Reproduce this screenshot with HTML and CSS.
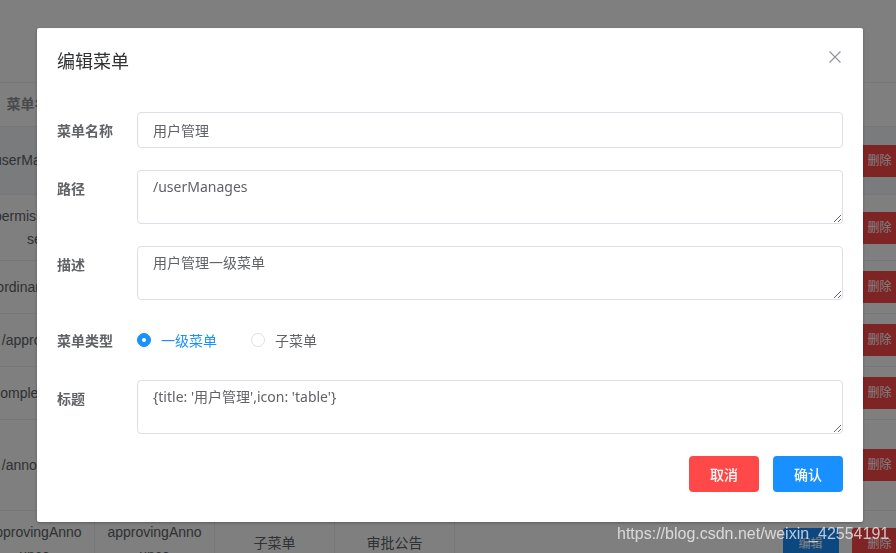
FILE: index.html
```html
<!DOCTYPE html>
<html lang="zh-CN">
<head>
<meta charset="utf-8">
<title>编辑菜单</title>
<link rel="stylesheet" href="styles.css">
</head>
<body>
<div class="page">
  <div class="table">
    <div class="tr th h44">
      <div class="td bl">菜单名称</div>
      <div class="td bl">菜单路径</div>
      <div class="td bl">菜单类型</div>
      <div class="td bl">标题</div>
      <div class="td wide"></div>
      <div class="td ops">操作</div>
    </div>
    <div class="tr hover h68">
      <div class="td bl">/userManages</div>
      <div class="td bl"></div>
      <div class="td bl"></div>
      <div class="td bl"></div>
      <div class="td wide"></div>
      <div class="td ops"><span class="tbtn edit">编辑</span><span class="tbtn del">删除</span></div>
    </div>
    <div class="tr h66">
      <div class="td bl">/permissionsU<br>se</div>
      <div class="td bl"></div>
      <div class="td bl"></div>
      <div class="td bl"></div>
      <div class="td wide"></div>
      <div class="td ops"><span class="tbtn edit">编辑</span><span class="tbtn del">删除</span></div>
    </div>
    <div class="tr h53">
      <div class="td bl">/ordinaryUser</div>
      <div class="td bl"></div>
      <div class="td bl"></div>
      <div class="td bl"></div>
      <div class="td wide"></div>
      <div class="td ops"><span class="tbtn edit">编辑</span><span class="tbtn del">删除</span></div>
    </div>
    <div class="tr h53">
      <div class="td bl">/approving</div>
      <div class="td bl"></div>
      <div class="td bl"></div>
      <div class="td bl"></div>
      <div class="td wide"></div>
      <div class="td ops"><span class="tbtn edit">编辑</span><span class="tbtn del">删除</span></div>
    </div>
    <div class="tr h53">
      <div class="td bl">/completedList</div>
      <div class="td bl"></div>
      <div class="td bl"></div>
      <div class="td bl"></div>
      <div class="td wide"></div>
      <div class="td ops"><span class="tbtn edit">编辑</span><span class="tbtn del">删除</span></div>
    </div>
    <div class="tr h91">
      <div class="td bl">/announce</div>
      <div class="td bl"></div>
      <div class="td bl"></div>
      <div class="td bl"></div>
      <div class="td wide"></div>
      <div class="td ops"><span class="tbtn edit">编辑</span><span class="tbtn del">删除</span></div>
    </div>
    <div class="tr h66">
      <div class="td bl">approvingAnnounce</div>
      <div class="td bl">approvingAnnounce</div>
      <div class="td bl">子菜单</div>
      <div class="td bl">审批公告</div>
      <div class="td wide"></div>
      <div class="td ops"><span class="tbtn edit">编辑</span><span class="tbtn del">删除</span></div>
    </div>
  </div>
</div>

<div class="overlay">
  <div class="dialog">
    <div class="dialog-header">
      <span class="dialog-title">编辑菜单</span>
      <svg class="close" width="16" height="16" viewBox="0 0 16 16">
        <path d="M2.5 2.5 L13.5 13.5 M13.5 2.5 L2.5 13.5" stroke="#909399" stroke-width="1.1" fill="none"/>
      </svg>
    </div>
    <div class="dialog-body">
      <div class="form-item">
        <label class="form-label">菜单名称</label>
        <input class="input" type="text" value="用户管理">
      </div>
      <div class="form-item">
        <label class="form-label">路径</label>
        <textarea class="textarea" rows="2">/userManages</textarea>
      </div>
      <div class="form-item">
        <label class="form-label">描述</label>
        <textarea class="textarea" rows="2">用户管理一级菜单</textarea>
      </div>
      <div class="form-item">
        <label class="form-label">菜单类型</label>
        <div class="radio-group">
          <span class="radio checked"><span class="radio-dot"></span><span class="radio-text">一级菜单</span></span>
          <span class="radio"><span class="radio-dot"></span><span class="radio-text">子菜单</span></span>
        </div>
      </div>
      <div class="form-item last">
        <label class="form-label">标题</label>
        <textarea class="textarea" rows="2">{title: '用户管理',icon: 'table'}</textarea>
      </div>
    </div>
    <div class="dialog-footer">
      <button class="btn btn-cancel">取消</button>
      <button class="btn btn-ok">确认</button>
    </div>
  </div>
</div>

<div class="watermark">https://blog.csdn.net/weixin_42554191</div>
</body>
</html>
```

FILE: styles.css
```css
html, body {
  margin: 0;
  padding: 0;
}
body {
  width: 896px;
  height: 553px;
  overflow: hidden;
  background: #fff;
  font-family: "Liberation Sans", "Noto Sans CJK SC", sans-serif;
  position: relative;
}

/* background table */
.page {
  padding-top: 82px;
}
.table {
  margin-left: -25px;
  width: 945px;
  border-top: 1px solid #ebeef5;
}
.tr {
  display: flex;
  align-items: stretch;
  box-sizing: border-box;
  border-bottom: 1px solid #ebeef5;
  background: #fff;
}
.tr.hover {
  background: #f5f7fa;
}
.h44 { height: 44px; }
.h53 { height: 53px; }
.h66 { height: 66px; }
.h68 { height: 68px; }
.h91 { height: 91px; }

.td {
  flex: none;
  width: 120px;
  box-sizing: border-box;
  padding: 0 10px;
  display: flex;
  align-items: center;
  justify-content: center;
  text-align: center;
  font-size: 14px;
  line-height: 23px;
  color: #606266;
  word-break: break-all;
}
.td.bl {
  border-right: 1px solid #ebeef5;
}
.td.wide {
  width: 315px;
}
.td.ops {
  width: 150px;
  gap: 13px;
  padding: 0;
}
.th .td {
  color: #909399;
  font-weight: bold;
}
.tbtn {
  flex: none;
  width: 56px;
  height: 32px;
  box-sizing: border-box;
  border-radius: 3px;
  color: #fff;
  font-size: 12px;
  line-height: 32px;
  text-align: center;
}
.tbtn.edit { background: #1890ff; }
.tbtn.del { background: #ff4949; }

/* overlay + dialog */
.overlay {
  position: fixed;
  left: 0;
  top: 0;
  right: 0;
  bottom: 0;
  background: rgba(0, 0, 0, 0.5);
  padding-top: 28px;
  box-sizing: border-box;
}
.dialog {
  margin-left: 37px;
  width: 826px;
  background: #fff;
  border-radius: 2px;
  box-shadow: 0 1px 3px rgba(0, 0, 0, 0.3);
  font-family: "Noto Sans", "Noto Sans CJK SC", sans-serif;
}
.dialog-header {
  display: flex;
  justify-content: space-between;
  align-items: flex-start;
  padding: 20px 20px 10px;
}
.dialog-title {
  font-size: 18px;
  line-height: 24px;
  color: #303133;
  font-family: "Noto Sans CJK SC", sans-serif;
}
.close {
  display: block;
  margin-top: 1px;
}
.dialog-body {
  padding: 30px 20px 0;
}
.form-item {
  display: flex;
  align-items: flex-start;
  margin-bottom: 22px;
}
.form-item.last {
  margin-bottom: 0;
}
.form-label {
  flex: none;
  width: 80px;
  line-height: 36px;
  font-size: 14px;
  font-weight: bold;
  color: #606266;
  font-family: "Noto Sans CJK SC", sans-serif;
}
.input {
  flex: 1;
  min-width: 0;
  height: 36px;
  box-sizing: border-box;
  border: 1px solid #dcdfe6;
  border-radius: 4px;
  padding: 0 15px;
  font-family: "Noto Sans", "Noto Sans CJK SC", sans-serif;
  font-size: 14px;
  color: #606266;
  outline: none;
  background: #fff;
}
.textarea {
  flex: 1;
  min-width: 0;
  height: 54px;
  box-sizing: border-box;
  border: 1px solid #dcdfe6;
  border-radius: 4px;
  padding: 5px 15px;
  font-family: "Noto Sans", "Noto Sans CJK SC", sans-serif;
  font-size: 14px;
  line-height: 1.5;
  color: #606266;
  resize: vertical;
  outline: none;
  margin: 0;
  background: #fff;
}
.radio-group {
  display: flex;
  align-items: center;
  height: 36px;
}
.radio {
  display: flex;
  align-items: center;
  margin-right: 34px;
  font-size: 14px;
  color: #606266;
  font-family: "Noto Sans CJK SC", sans-serif;
}
.radio-dot {
  flex: none;
  width: 14px;
  height: 14px;
  box-sizing: border-box;
  border: 1px solid #dcdfe6;
  border-radius: 50%;
  background: #fff;
  margin-right: 10px;
  display: flex;
  align-items: center;
  justify-content: center;
}
.radio.checked .radio-dot {
  background: #1890ff;
  border-color: #1890ff;
}
.radio.checked .radio-dot::after {
  content: "";
  width: 4px;
  height: 4px;
  border-radius: 50%;
  background: #fff;
}
.radio.checked .radio-text {
  color: #1890ff;
}
.dialog-footer {
  display: flex;
  justify-content: flex-end;
  gap: 14px;
  padding: 22px 20px 30px;
}
.btn {
  height: 36px;
  width: 70px;
  border: none;
  border-radius: 4px;
  color: #fff;
  font-size: 14px;
  font-family: "Noto Sans CJK SC", sans-serif;
  font-weight: 500;
  padding: 0;
}
.btn-cancel { background: #ff4949; }
.btn-ok { background: #1890ff; }

.watermark {
  position: fixed;
  left: 617px;
  top: 524px;
  font-family: "Liberation Sans", sans-serif;
  font-size: 16px;
  line-height: 20px;
  color: rgba(255, 255, 255, 0.7);
  white-space: nowrap;
}
```
